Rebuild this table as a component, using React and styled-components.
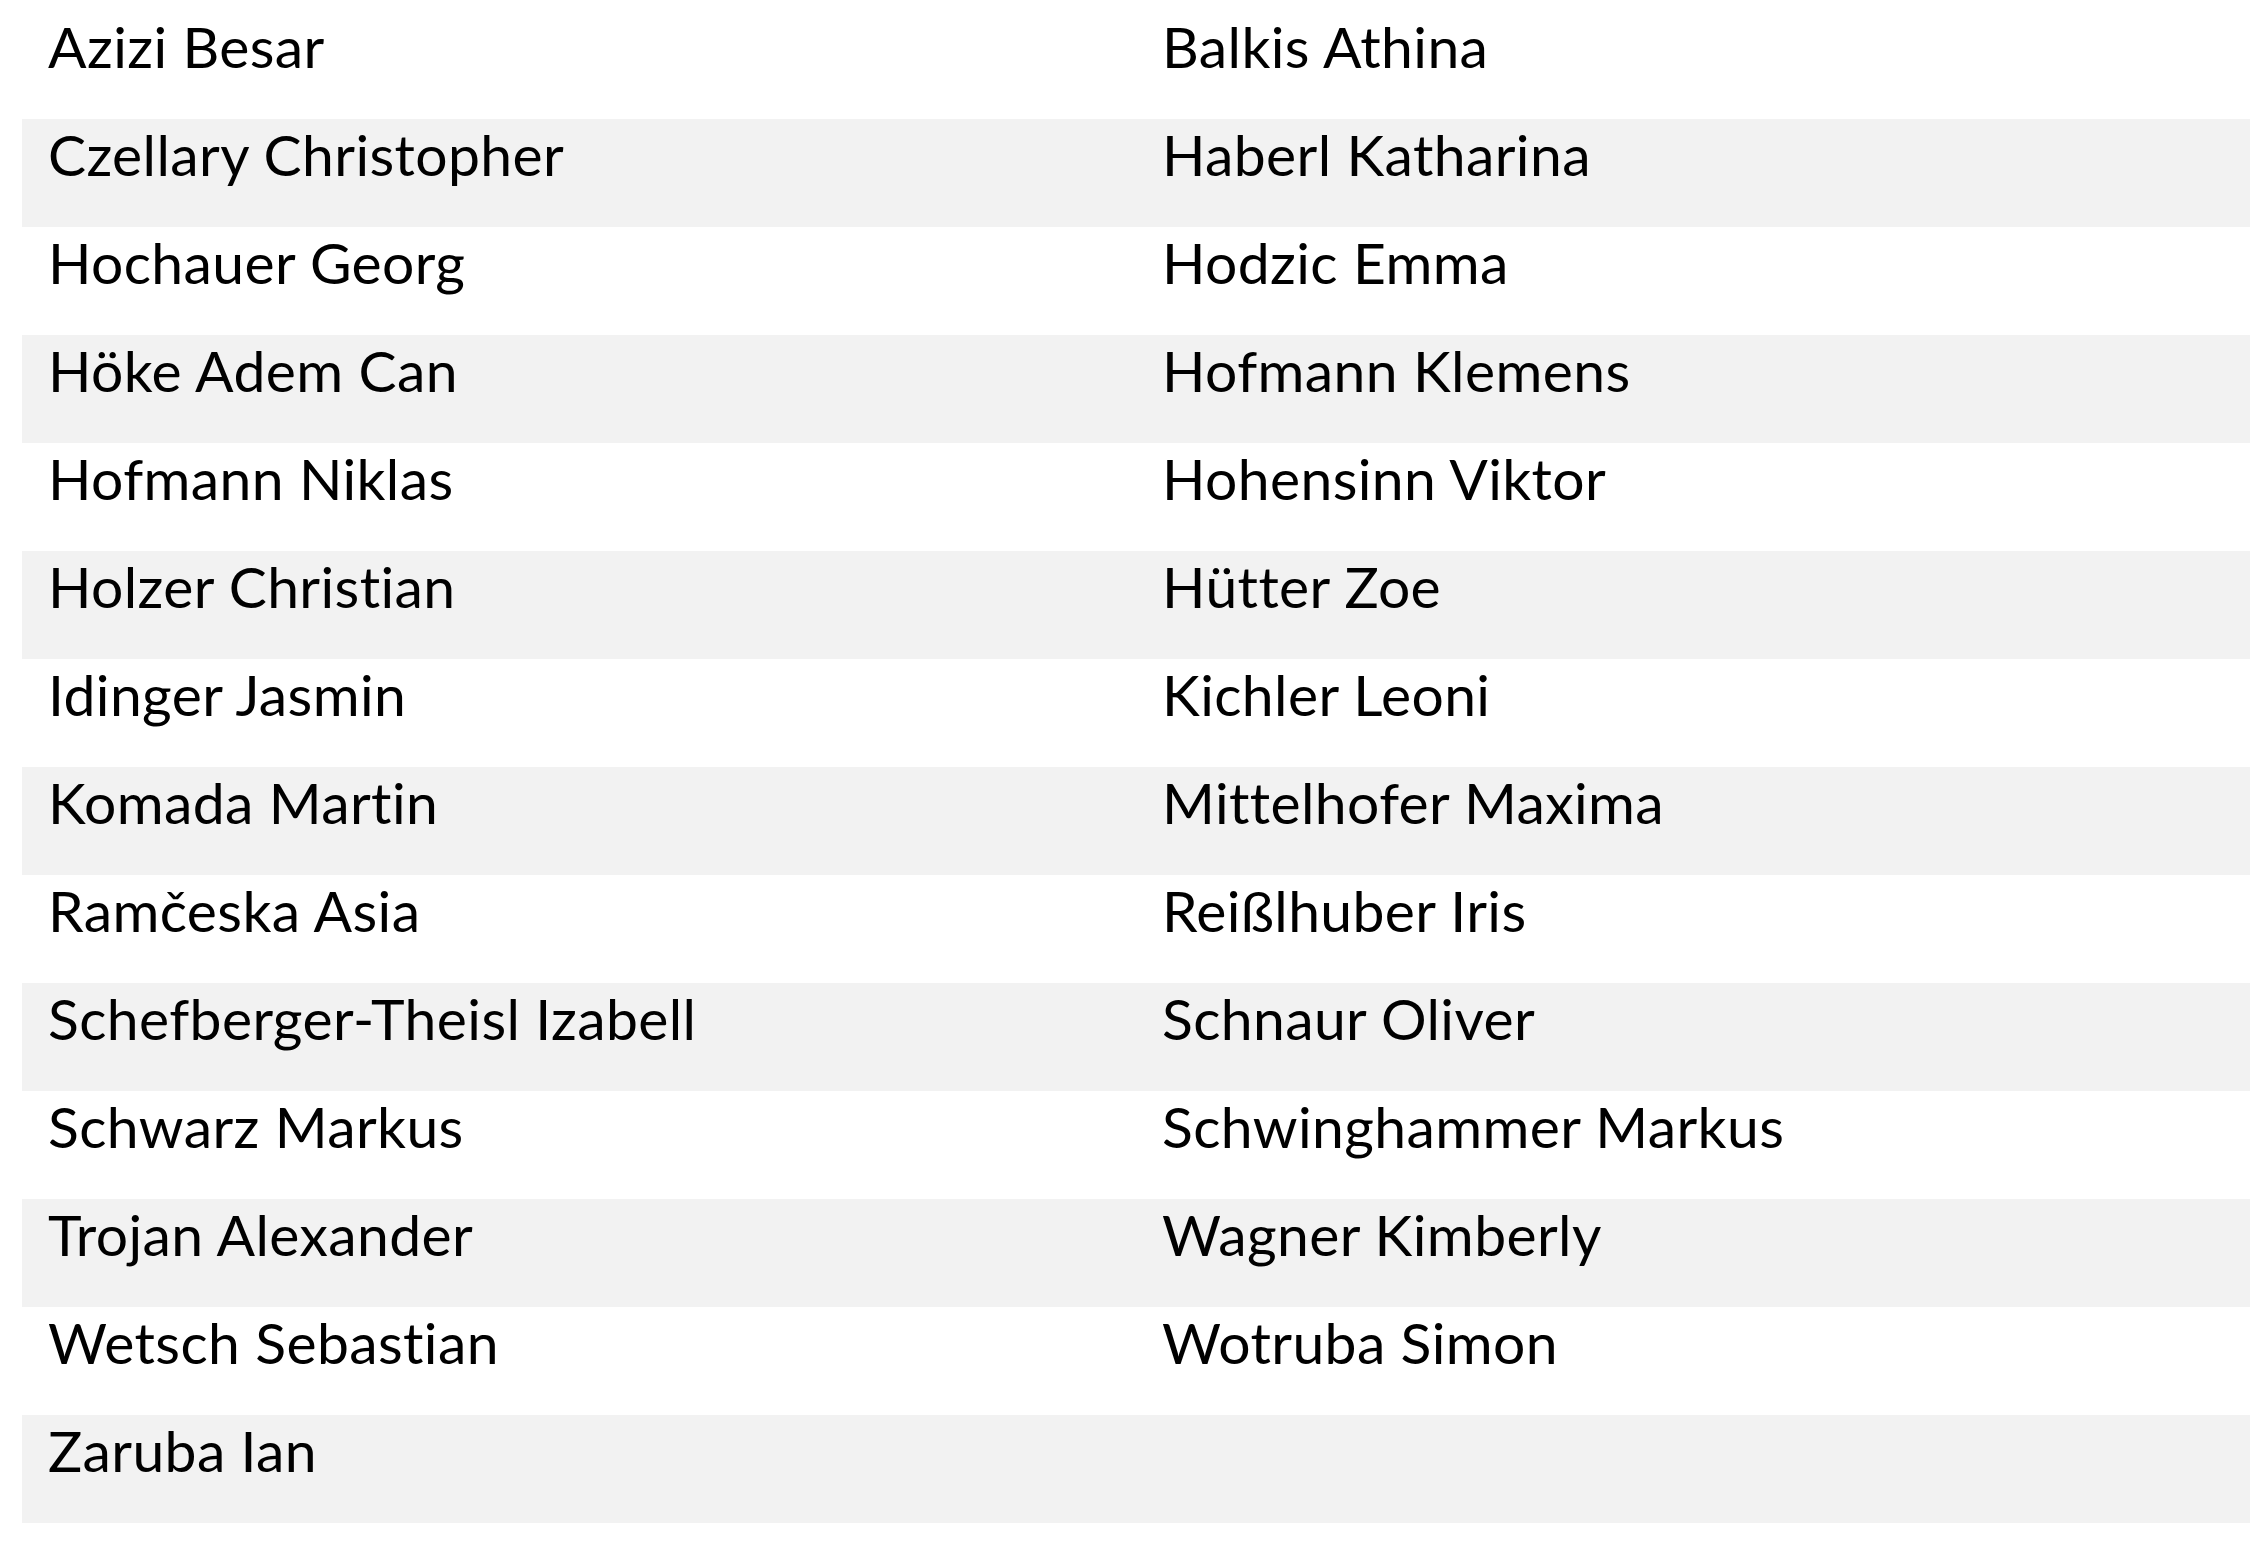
import React from 'react';
import styled, { createGlobalStyle } from 'styled-components';

const GlobalStyle = createGlobalStyle`
  html, body {
    margin: 0;
    padding: 0;
    background: #ffffff;
  }
`;

const Page = styled.div`
  padding: 11px 16px 23px 22px;
  font-family: Lato, 'Liberation Sans', sans-serif;
  color: #000000;
`;

const Table = styled.div`
  display: flex;
  flex-direction: column;
  width: 2228px;
`;

const Row = styled.div`
  display: grid;
  grid-template-columns: 1114px 1114px;
  height: 108px;
  background-color: ${(p) => (p.$striped ? '#f2f2f2' : '#ffffff')};
`;

const Cell = styled.div`
  padding: 3px 0 0 26px;
  font-size: 57px;
  line-height: 64px;
  letter-spacing: 0.4px;
  font-variant-ligatures: none;
  white-space: nowrap;
`;

const names = [
  ['Azizi Besar', 'Balkis Athina'],
  ['Czellary Christopher', 'Haberl Katharina'],
  ['Hochauer Georg', 'Hodzic Emma'],
  ['Höke Adem Can', 'Hofmann Klemens'],
  ['Hofmann Niklas', 'Hohensinn Viktor'],
  ['Holzer Christian', 'Hütter Zoe'],
  ['Idinger Jasmin', 'Kichler Leoni'],
  ['Komada Martin', 'Mittelhofer Maxima'],
  ['Ramčeska Asia', 'Reißlhuber Iris'],
  ['Schefberger-Theisl Izabell', 'Schnaur Oliver'],
  ['Schwarz Markus', 'Schwinghammer Markus'],
  ['Trojan Alexander', 'Wagner Kimberly'],
  ['Wetsch Sebastian', 'Wotruba Simon'],
  ['Zaruba Ian', ''],
];

export default function App() {
  return (
    <>
      <GlobalStyle />
      <Page>
        <Table>
          {names.map(([left, right], i) => (
            <Row key={left} $striped={i % 2 === 1}>
              <Cell>{left}</Cell>
              <Cell>{right}</Cell>
            </Row>
          ))}
        </Table>
      </Page>
    </>
  );
}
